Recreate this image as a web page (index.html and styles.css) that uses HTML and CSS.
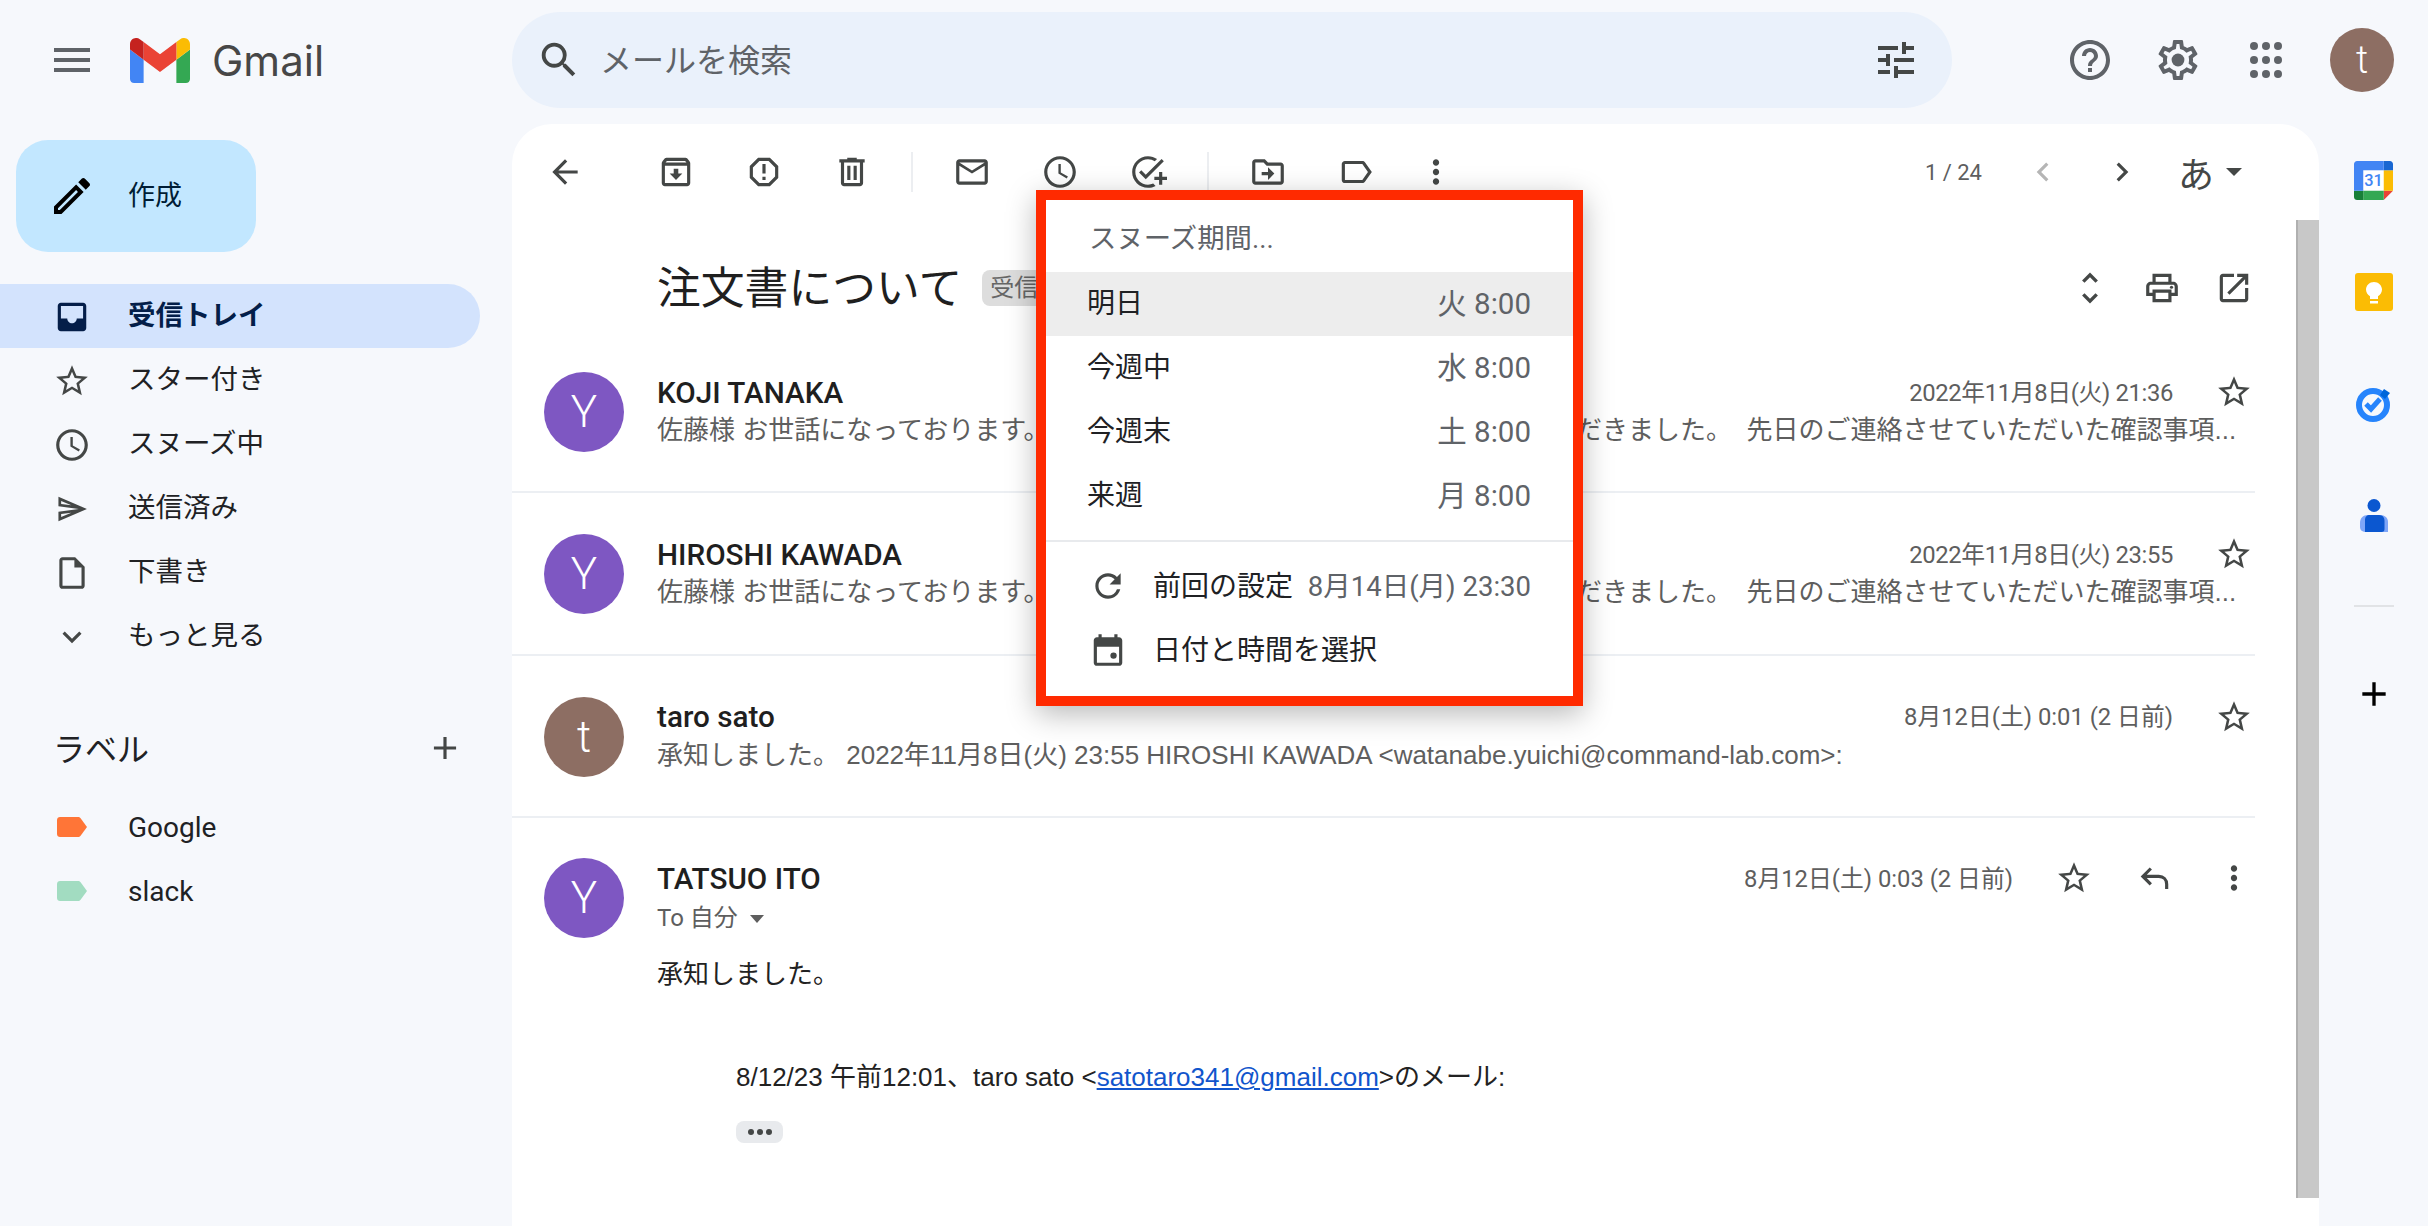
FILE: index.html
```html
<!DOCTYPE html>
<html lang="ja">
<head>
<meta charset="UTF-8" />
<meta name="viewport" content="width=device-width, initial-scale=1" />
<title>Gmail</title>
<link rel="stylesheet" href="styles.css">
</head>

<body>
  <svg class="defs" width="0" height="0">
    <symbol id="i-star" viewBox="0 0 24 24"><path d="M22 9.24l-7.19-.62L12 2 9.19 8.63 2 9.24l5.46 4.73L5.82 21 12 17.27 18.18 21l-1.63-7.03L22 9.24zM12 15.4l-3.76 2.27 1-4.28-3.32-2.88 4.38-.38L12 6.1l1.71 4.04 4.38.38-3.32 2.88 1 4.28L12 15.4z"/></symbol>
    <symbol id="i-clock" viewBox="0 0 24 24"><path d="M11.99 2C6.47 2 2 6.48 2 12s4.47 10 9.99 10C17.52 22 22 17.52 22 12S17.52 2 11.99 2zM12 20c-4.42 0-8-3.58-8-8s3.58-8 8-8 8 3.58 8 8-3.58 8-8 8zm.5-13H11v6l5.25 3.15.75-1.23-4.5-2.67z"/></symbol>
    <symbol id="i-more" viewBox="0 0 24 24"><path d="M12 8c1.1 0 2-.9 2-2s-.9-2-2-2-2 .9-2 2 .9 2 2 2zm0 2c-1.1 0-2 .9-2 2s.9 2 2 2 2-.9 2-2-.9-2-2-2zm0 6c-1.1 0-2 .9-2 2s.9 2 2 2 2-.9 2-2-.9-2-2-2z"/></symbol>
    <symbol id="i-add" viewBox="0 0 24 24"><path d="M19 13h-6v6h-2v-6H5v-2h6V5h2v6h6v2z"/></symbol>
    <symbol id="i-tag" viewBox="0 0 30 20"><path d="M3 0h18c1 0 2 .5 2.6 1.3L30 10l-6.4 8.7c-.6.8-1.6 1.3-2.6 1.3H3c-1.7 0-3-1.3-3-3V3c0-1.7 1.3-3 3-3z"/></symbol>
  </svg>

  <div class="app">
    <header class="topbar">
      <div class="brand">
        <svg class="ic ic-lg" viewBox="0 0 24 24"><path d="M3 18h18v-2H3v2zm0-5h18v-2H3v2zm0-7v2h18V6H3z"/></svg>
        <svg class="logo" viewBox="52 42 88 66">
          <path fill="#4285f4" d="M58 108h14V74L52 59v43c0 3.32 2.69 6 6 6"/>
          <path fill="#34a853" d="M120 108h14c3.32 0 6-2.69 6-6V59l-20 15"/>
          <path fill="#fbbc04" d="M120 48v26l20-15v-8c0-7.42-8.47-11.65-14.4-7.2"/>
          <path fill="#ea4335" d="M72 74V48l24 18 24-18v26L96 92"/>
          <path fill="#c5221f" d="M52 51v8l20 15V48l-5.6-4.2c-5.94-4.45-14.4-.22-14.4 7.2"/>
        </svg>
        <span class="brand-name">Gmail</span>
      </div>
      <div class="search">
        <svg class="ic ic-search" viewBox="0 0 24 24"><path d="M15.5 14h-.79l-.28-.27A6.471 6.471 0 0 0 16 9.5 6.5 6.5 0 1 0 9.5 16c1.61 0 3.09-.59 4.23-1.57l.27.28v.79l5 4.99L20.49 19l-4.99-5zm-6 0C7.01 14 5 11.99 5 9.5S7.01 5 9.5 5 14 7.01 14 9.5 11.99 14 9.5 14z"/></svg>
        <span class="search-text">メールを検索</span>
        <svg class="ic ic-lg search-tune" viewBox="0 0 24 24"><path d="M3 17v2h6v-2H3zM3 5v2h10V5H3zm10 16v-2h8v-2h-8v-2h-2v6h2zM7 9v2H3v2h4v2h2V9H7zm14 4v-2H11v2h10zm-6-4h2V7h4V5h-4V3h-2v6z"/></svg>
      </div>
      <div class="top-actions">
        <span class="top-btn"><svg class="ic ic-lg" viewBox="0 0 24 24"><path d="M11 18h2v-2h-2v2zm1-16C6.48 2 2 6.48 2 12s4.48 10 10 10 10-4.48 10-10S17.52 2 12 2zm0 18c-4.41 0-8-3.59-8-8s3.59-8 8-8 8 3.59 8 8-3.59 8-8 8zm0-14c-2.21 0-4 1.79-4 4h2c0-1.1.9-2 2-2s2 .9 2 2c0 2-3 1.75-3 5h2c0-2.25 3-2.5 3-5 0-2.21-1.79-4-4-4z"/></svg></span>
        <span class="top-btn"><svg class="ic ic-lg" viewBox="0 0 24 24"><path d="M19.43 12.98c.04-.32.07-.64.07-.98 0-.34-.03-.66-.07-.98l2.11-1.65c.19-.15.24-.42.12-.64l-2-3.46c-.09-.16-.26-.25-.44-.25-.06 0-.12.01-.17.03l-2.49 1c-.52-.4-1.08-.73-1.69-.98l-.38-2.65C14.46 2.18 14.25 2 14 2h-4c-.25 0-.46.18-.49.42l-.38 2.65c-.61.25-1.17.59-1.69.98l-2.49-1c-.06-.02-.12-.03-.18-.03-.17 0-.34.09-.43.25l-2 3.46c-.13.22-.07.49.12.64l2.11 1.65c-.04.32-.07.65-.07.98 0 .33.03.66.07.98l-2.11 1.65c-.19.15-.24.42-.12.64l2 3.46c.09.16.26.25.44.25.06 0 .12-.01.17-.03l2.49-1c.52.4 1.08.73 1.69.98l.38 2.65c.03.24.24.42.49.42h4c.25 0 .46-.18.49-.42l.38-2.65c.61-.25 1.17-.59 1.69-.98l2.49 1c.06.02.12.03.18.03.17 0 .34-.09.43-.25l2-3.46c.12-.22.07-.49-.12-.64l-2.11-1.65zm-1.98-1.71c.04.31.05.52.05.73 0 .21-.02.43-.05.73l-.14 1.13.89.7 1.08.84-.7 1.21-1.27-.51-1.04-.42-.9.68c-.43.32-.84.56-1.25.73l-1.06.43-.16 1.13-.2 1.35h-1.4l-.19-1.35-.16-1.13-1.06-.43c-.43-.18-.83-.41-1.23-.71l-.91-.7-1.06.43-1.27.51-.7-1.21 1.08-.84.89-.7-.14-1.13c-.03-.31-.05-.54-.05-.74s.02-.43.05-.73l.14-1.13-.89-.7-1.08-.84.7-1.21 1.27.51 1.04.42.9-.68c.43-.32.84-.56 1.25-.73l1.06-.43.16-1.13.2-1.35h1.39l.19 1.35.16 1.13 1.06.43c.43.18.83.41 1.23.71l.91.7 1.06-.43 1.27-.51.7 1.21-1.07.85-.89.7.14 1.13z"/><circle cx="12" cy="12" r="3.2"/></svg></span>
        <span class="top-btn"><svg class="ic ic-lg" viewBox="0 0 24 24"><circle cx="6" cy="5" r="2"/><circle cx="12" cy="5" r="2"/><circle cx="18" cy="5" r="2"/><circle cx="6" cy="12" r="2"/><circle cx="12" cy="12" r="2"/><circle cx="18" cy="12" r="2"/><circle cx="6" cy="19" r="2"/><circle cx="12" cy="19" r="2"/><circle cx="18" cy="19" r="2"/></svg></span>
        <span class="avatar avatar-top brown">t</span>
      </div>
    </header>

    <div class="content">
      <aside class="sidebar">
        <div class="compose">
          <svg class="ic ic-lg compose-icon" viewBox="0 0 24 24"><path d="M3 17.25V21h3.75L17.81 9.94l-3.75-3.75L3 17.25zM5.92 19H5v-.92l9.06-9.06.92.92L5.92 19zM20.71 5.63l-2.34-2.34c-.2-.2-.45-.29-.71-.29s-.51.1-.7.29l-1.83 1.83 3.75 3.75 1.83-1.83c.39-.39.39-1.02 0-1.41z"/></svg>
          <span>作成</span>
        </div>
        <ul class="nav">
          <li class="active"><svg class="ic" viewBox="0 0 24 24"><path d="M19 3H5c-1.1 0-2 .9-2 2v14c0 1.1.9 2 2 2h14c1.1 0 2-.9 2-2V5c0-1.1-.9-2-2-2zm0 10h-4c0 1.66-1.35 3-3 3s-3-1.34-3-3H5V5h14v8z"/></svg>受信トレイ</li>
          <li><svg class="ic"><use href="#i-star"/></svg>スター付き</li>
          <li><svg class="ic"><use href="#i-clock"/></svg>スヌーズ中</li>
          <li><svg class="ic" viewBox="0 0 28 28"><path d="M6.01 8.03l7.51 3.22-7.52-1 .01-2.22m7.5 8.72L6 19.97v-2.22l7.51-1M4.01 5L4 12l15 2-15 2 .01 7L25 14 4.01 5z"/></svg>送信済み</li>
          <li><svg class="ic" viewBox="0 0 24 24"><path d="M14 2H6c-1.1 0-1.99.9-1.99 2L4 20c0 1.1.89 2 1.99 2H18c1.1 0 2-.9 2-2V8l-6-6zM6 20V4h7.5v4.5H18V20H6z"/></svg>下書き</li>
          <li><svg class="ic" viewBox="0 0 24 24"><path d="M16.59 8.59L12 13.17 7.41 8.59 6 10l6 6 6-6z"/></svg>もっと見る</li>
        </ul>
        <div class="labels-head">
          <span>ラベル</span>
          <svg class="ic"><use href="#i-add"/></svg>
        </div>
        <ul class="nav labels">
          <li><svg class="tag tag-orange"><use href="#i-tag"/></svg>Google</li>
          <li><svg class="tag tag-green"><use href="#i-tag"/></svg>slack</li>
        </ul>
      </aside>

      <main class="thread">
        <div class="toolbar">
          <span class="tb-btn tb-back"><svg class="ic" viewBox="0 0 24 24"><path d="M20 11H7.83l5.59-5.59L12 4l-8 8 8 8 1.41-1.41L7.83 13H20v-2z"/></svg></span>
          <span class="tb-btn"><svg class="ic" viewBox="0 0 24 24"><path d="M20.54 5.23l-1.39-1.68C18.88 3.21 18.47 3 18 3H6c-.47 0-.88.21-1.16.55L3.46 5.23C3.17 5.57 3 6.02 3 6.5V19c0 1.1.9 2 2 2h14c1.1 0 2-.9 2-2V6.5c0-.48-.17-.93-.46-1.27zM6.24 5h11.52l.83 1H5.42l.82-1zM5 19V8h14v11H5zm8.45-9h-2.9v3H8l4 4 4-4h-2.55z"/></svg></span>
          <span class="tb-btn"><svg class="ic" viewBox="0 0 24 24"><path d="M15.73 3H8.27L3 8.27v7.46L8.27 21h7.46L21 15.73V8.27L15.73 3zM19 14.9L14.9 19H9.1L5 14.9V9.1L9.1 5h5.8L19 9.1v5.8zM11 7h2v6h-2zm0 8h2v2h-2z"/></svg></span>
          <span class="tb-btn"><svg class="ic" viewBox="0 0 24 24"><path d="M15 4V3H9v1H4v2h1v13c0 1.1.9 2 2 2h10c1.1 0 2-.9 2-2V6h1V4h-5zm2 15H7V6h10v13zM9 8h2v9H9zm4 0h2v9h-2z"/></svg></span>
          <span class="tb-sep"></span>
          <span class="tb-btn"><svg class="ic" viewBox="0 0 24 24"><path d="M22 6c0-1.1-.9-2-2-2H4c-1.1 0-2 .9-2 2v12c0 1.1.9 2 2 2h16c1.1 0 2-.9 2-2V6zm-2 0l-8 5-8-5h16zm0 12H4V8l8 5 8-5v10z"/></svg></span>
          <span class="tb-btn"><svg class="ic"><use href="#i-clock"/></svg></span>
          <span class="tb-btn"><svg class="ic" viewBox="0 0 24 24"><path d="M22 5.18L10.59 16.6l-4.24-4.24 1.41-1.41 2.83 2.83 10-10L22 5.18zM12 20c-4.41 0-8-3.59-8-8s3.59-8 8-8c1.57 0 3.04.46 4.28 1.25l1.45-1.45C16.1 2.67 14.13 2 12 2 6.48 2 2 6.48 2 12s4.48 10 10 10c1.73 0 3.36-.44 4.78-1.22l-1.5-1.5c-1 .46-2.11.72-3.28.72zm7-5h-3v2h3v3h2v-3h3v-2h-3v-3h-2v3z"/></svg></span>
          <span class="tb-sep"></span>
          <span class="tb-btn"><svg class="ic" viewBox="0 0 24 24"><path d="M20 6h-8l-2-2H4c-1.1 0-1.99.9-1.99 2L2 18c0 1.1.9 2 2 2h16c1.1 0 2-.9 2-2V8c0-1.1-.9-2-2-2zm0 12H4V6h5.17l2 2H20v10zm-8-4H8v-2h4V9l4 4-4 4v-3z"/></svg></span>
          <span class="tb-btn"><svg class="ic" viewBox="0 0 24 24"><path d="M17.63 5.84C17.27 5.33 16.67 5 16 5L5 5.01C3.9 5.01 3 5.9 3 7v10c0 1.1.9 1.99 2 1.99L16 19c.67 0 1.27-.33 1.63-.84L22 12l-4.37-6.16zM16 17H5V7h11l3.55 5L16 17z"/></svg></span>
          <span class="tb-btn tb-narrow"><svg class="ic"><use href="#i-more"/></svg></span>

          <div class="pager">
            <span class="pager-text">1 / 24</span>
            <svg class="ic pager-prev" viewBox="0 0 24 24"><path d="M15.41 7.41L14 6l-6 6 6 6 1.41-1.41L10.83 12z"/></svg>
            <svg class="ic pager-next" viewBox="0 0 24 24"><path d="M10 6L8.59 7.41 13.17 12l-4.58 4.59L10 18l6-6z"/></svg>
            <span class="pager-ime">あ</span>
            <span class="pager-caret"></span>
          </div>
        </div>

        <div class="subject">
          <h1>注文書について</h1>
          <span class="chip">受信トレイ</span>
          <div class="subject-actions">
            <svg class="ic" viewBox="1 1 22 22"><path d="M12 5.83L15.17 9l1.41-1.41L12 3 7.41 7.59 8.83 9 12 5.83zm0 12.34L8.83 15l-1.41 1.41L12 21l4.59-4.59L15.17 15 12 18.17z"/></svg>
            <svg class="ic" viewBox="0 0 24 24"><path d="M19 8h-1V3H6v5H5c-1.66 0-3 1.34-3 3v6h4v4h12v-4h4v-6c0-1.66-1.34-3-3-3zM8 5h8v3H8V5zm8 12v2H8v-4h8v2zm2-2v-2H6v2H4v-4c0-.55.45-1 1-1h14c.55 0 1 .45 1 1v4h-2z"/><circle cx="18" cy="11.5" r="1"/></svg>
            <svg class="ic" viewBox="0 0 24 24"><path d="M19 19H5V5h7V3H5c-1.11 0-2 .9-2 2v14c0 1.1.89 2 2 2h14c1.1 0 2-.9 2-2v-7h-2v7zM14 3v2h3.59l-9.83 9.83 1.41 1.41L19 6.41V10h2V3h-7z"/></svg>
          </div>
        </div>

        <div class="msg">
          <span class="avatar purple">Y</span>
          <div class="msg-body">
            <div class="msg-head">
              <span class="sender">KOJI TANAKA</span>
              <span class="date date-long">2022年11月8日(火) 21:36</span>
              <svg class="ic star"><use href="#i-star"/></svg>
            </div>
            <p class="snippet">佐藤様 お世話になっております。 この度は、ご注文書についてのご返信をいただきました。&nbsp; 先日のご連絡させていただいた確認事項...</p>
          </div>
        </div>

        <div class="msg">
          <span class="avatar purple">Y</span>
          <div class="msg-body">
            <div class="msg-head">
              <span class="sender">HIROSHI KAWADA</span>
              <span class="date date-long">2022年11月8日(火) 23:55</span>
              <svg class="ic star"><use href="#i-star"/></svg>
            </div>
            <p class="snippet">佐藤様 お世話になっております。 この度は、ご注文書についてのご返信をいただきました。&nbsp; 先日のご連絡させていただいた確認事項...</p>
          </div>
        </div>

        <div class="msg">
          <span class="avatar brown">t</span>
          <div class="msg-body">
            <div class="msg-head">
              <span class="sender">taro sato</span>
              <span class="date">8月12日(土) 0:01 (2 日前)</span>
              <svg class="ic star"><use href="#i-star"/></svg>
            </div>
            <p class="snippet">承知しました。 2022年11月8日(火) 23:55 HIROSHI KAWADA &lt;watanabe.yuichi@command-lab.com&gt;:</p>
          </div>
        </div>

        <div class="msg msg-open">
          <span class="avatar purple">Y</span>
          <div class="msg-body">
            <div class="msg-head">
              <span class="sender">TATSUO ITO</span>
              <span class="date">8月12日(土) 0:03 (2 日前)</span>
              <svg class="ic star"><use href="#i-star"/></svg>
              <svg class="ic msg-act" viewBox="0 0 24 24"><path d="M10 6L5 11l5 5M5 11h10c3 0 5 2 5 5v3" fill="none" stroke="currentColor" stroke-width="2"/></svg>
              <svg class="ic msg-act"><use href="#i-more"/></svg>
            </div>
            <div class="to-line">To 自分 <span class="to-caret"></span></div>
            <p class="text">承知しました。</p>
            <p class="quote">8/12/23 午前12:01、taro sato &lt;<a href="#">satotaro341@gmail.com</a>&gt;のメール:</p>
            <span class="dots"><i></i><i></i><i></i></span>
          </div>
        </div>

        <div class="scrollbar"></div>
      </main>

      <aside class="addons">
        <span class="addon">
          <svg width="39" height="39" viewBox="0 0 200 200">
            <path fill="#fff" d="M152.6 47.4H47.4v105.2h105.2z"/>
            <path fill="#ea4335" d="M152.6 200L200 152.6h-47.4z"/>
            <path fill="#fbbc04" d="M200 47.4h-47.4v105.2H200z"/>
            <path fill="#34a853" d="M152.6 152.6H47.4V200h105.2z"/>
            <path fill="#188038" d="M0 152.6v31.6C0 192.9 7.1 200 15.8 200h31.6v-47.4z"/>
            <path fill="#1967d2" d="M200 47.4V15.8C200 7.1 192.9 0 184.2 0h-31.6v47.4z"/>
            <path fill="#4285f4" d="M152.6 0H15.8C7.1 0 0 7.1 0 15.8v136.8h47.4V47.4h105.2z"/>
            <text x="100" y="130" text-anchor="middle" class="cal-num">31</text>
          </svg>
        </span>
        <span class="addon">
          <svg width="38" height="38" viewBox="0 0 38 38">
            <rect width="38" height="38" rx="3" fill="#fbbc04"/>
            <path fill="#fff" d="M19 9c-4.4 0-8 3.4-8 7.6 0 2.9 1.7 5.4 4 6.7V26h8v-2.7c2.3-1.3 4-3.8 4-6.7C27 12.4 23.4 9 19 9zM15 28h8v2.5h-8z"/>
          </svg>
        </span>
        <span class="addon">
          <svg width="36" height="36" viewBox="0 0 36 36">
            <circle cx="17" cy="19" r="14" fill="none" stroke="#2684fc" stroke-width="6"/>
            <path fill="none" stroke="#2684fc" stroke-width="5" d="M10 18l5 5 9-10"/>
            <path fill="#0066da" d="M28 3l6 4-5 6-5-4z"/>
          </svg>
        </span>
        <span class="addon">
          <svg width="30" height="34" viewBox="0 0 30 34">
            <circle cx="15" cy="6.5" r="6.5" fill="#0b57d0"/>
            <path fill="#7fa6f8" d="M9 16h12c5 0 8 3 8 7v10H8c-5 0-7-2-7-5v-4c0-5 3-8 8-8z"/>
            <path fill="#0b57d0" d="M11 16h9c4 0 5.5 3 5.5 6v8c0 2-1 3-3 3H6v-12c0-3 1.5-5 5-5z"/>
          </svg>
        </span>
        <span class="addon-sep"></span>
        <span class="addon">
          <svg class="ic ic-plus"><use href="#i-add"/></svg>
        </span>
      </aside>
    </div>

    <!-- スヌーズのポップアップ -->
    <div class="snooze">
      <div class="snooze-title">スヌーズ期間...</div>
      <div class="snooze-item hover"><span>明日</span><span class="when">火 8:00</span></div>
      <div class="snooze-item"><span>今週中</span><span class="when">水 8:00</span></div>
      <div class="snooze-item"><span>今週末</span><span class="when">土 8:00</span></div>
      <div class="snooze-item"><span>来週</span><span class="when">月 8:00</span></div>
      <div class="snooze-sep"></div>
      <div class="snooze-item with-icon">
        <svg class="ic" viewBox="0 0 24 24"><path d="M17.65 6.35A7.958 7.958 0 0 0 12 4c-4.42 0-7.99 3.58-7.99 8s3.57 8 7.99 8c3.73 0 6.84-2.55 7.73-6h-2.08A5.99 5.99 0 0 1 12 18c-3.31 0-6-2.69-6-6s2.69-6 6-6c1.66 0 3.14.69 4.22 1.78L13 11h7V4l-2.35 2.35z"/></svg>
        <span>前回の設定</span><span class="when">8月14日(月) 23:30</span>
      </div>
      <div class="snooze-item with-icon">
        <svg class="ic" viewBox="0 0 24 24"><path d="M19 4h-1V2h-2v2H8V2H6v2H5c-1.1 0-2 .9-2 2v14c0 1.1.9 2 2 2h14c1.1 0 2-.9 2-2V6c0-1.1-.9-2-2-2zm0 16H5V10h14v10z"/><circle cx="15.5" cy="15.5" r="2"/></svg>
        <span>日付と時間を選択</span>
      </div>
    </div>
  </div>
</body>
</html>
```

FILE: styles.css
```css
* {
  box-sizing: border-box;
}
body {
  margin: 0;
  background: #f6f8fc;
  color: #1f1f1f;
  font-family: Roboto, "Noto Sans CJK JP", sans-serif;
  overflow: hidden;
}
.defs {
  position: absolute;
}
.app {
  position: relative;
  width: 2428px;
  height: 1226px;
  display: flex;
  flex-direction: column;
}
ul {
  list-style: none;
  margin: 0;
  padding: 0;
}
p, h1 {
  margin: 0;
}

/* icons */
.ic {
  width: 38px;
  height: 38px;
  flex: none;
  fill: #444746;
  color: #444746;
}
.ic-lg {
  width: 48px;
  height: 48px;
}

/* top bar */
.topbar {
  display: flex;
  align-items: center;
  height: 120px;
  margin-bottom: 4px;
}
.brand {
  width: 512px;
  display: flex;
  align-items: center;
  padding-left: 48px;
}
.brand .ic {
  fill: #5f6368;
}
.logo {
  width: 60px;
  height: 45px;
  margin-left: 34px;
}
.brand-name {
  margin-left: 22px;
  font-family: Inter, sans-serif;
  font-size: 42px;
  color: #474747;
}
.search {
  width: 1440px;
  height: 96px;
  border-radius: 48px;
  background: #eaf1fb;
  display: flex;
  align-items: center;
  padding: 0 32px 0 24px;
}
.ic-search {
  width: 46px;
  height: 46px;
}
.search-text {
  margin: 0 0 5px 18px;
  font-size: 32px;
  color: #5f6368;
}
.search-tune {
  margin-left: auto;
}
.top-actions {
  display: flex;
  align-items: center;
  margin-left: 94px;
}
.top-btn {
  width: 88px;
  display: flex;
  justify-content: center;
}
.top-btn .ic {
  fill: #5f6368;
}
.avatar {
  width: 80px;
  height: 80px;
  flex: none;
  border-radius: 50%;
  display: flex;
  align-items: center;
  justify-content: center;
  color: #fff;
  font-size: 44px;
  font-weight: 300;
}
.avatar-top {
  width: 64px;
  height: 64px;
  margin-left: 20px;
  font-size: 38px;
}
.purple { background: #7e57c2; }
.brown { background: #8d6e63; }

.content {
  flex: 1;
  display: flex;
  min-height: 0;
}

/* sidebar */
.sidebar {
  width: 512px;
  flex: none;
}
.compose {
  width: 240px;
  height: 112px;
  margin: 16px 0 32px 16px;
  border-radius: 32px;
  background: #c2e7ff;
  color: #001d35;
  display: flex;
  align-items: center;
  font-size: 27px;
  padding-left: 32px;
}
.compose span {
  margin-bottom: 5px;
}
.compose-icon {
  fill: #000;
  margin-right: 32px;
}
.nav li {
  width: 480px;
  height: 64px;
  display: flex;
  align-items: center;
  gap: 37px;
  padding: 0 0 6px 53px;
  border-radius: 0 32px 32px 0;
  font-size: 27.5px;
  color: #202124;
}
.nav li .ic {
  margin-top: 8px;
}
.nav li.active {
  background: #d3e3fd;
  color: #041e49;
  font-weight: 700;
}
.nav li.active .ic {
  fill: #041e49;
}
.labels-head {
  width: 480px;
  height: 64px;
  margin-top: 48px;
  display: flex;
  align-items: center;
  justify-content: space-between;
  padding: 0 16px 3px 53px;
  font-size: 32px;
  color: #202124;
}
.labels-head .ic {
  margin-top: 3px;
}
.labels {
  margin-top: 15px;
}
.nav.labels li {
  padding: 0 0 0 51px;
  font-size: 28px;
}
.tag {
  width: 30px;
  height: 20px;
  margin-left: 6px;
  margin-right: 4px;
}
.tag-orange { fill: #ff7537; }
.tag-green { fill: #a2dcc1; }

/* thread */
.thread {
  position: relative;
  width: 1807px;
  flex: none;
  background: #fff;
  border-radius: 40px 40px 0 0;
  overflow: hidden;
}
.toolbar {
  height: 96px;
  display: flex;
  align-items: center;
  padding-left: 9px;
}
.tb-btn {
  width: 88px;
  display: flex;
  justify-content: center;
}
.tb-back {
  margin-right: 23px;
}
.tb-narrow {
  width: 72px;
}
.tb-sep {
  width: 2px;
  height: 40px;
  margin: 0 15px;
  background: #eceef1;
}
.pager {
  margin-left: auto;
  display: flex;
  align-items: center;
  padding-right: 77px;
  color: #5e5e5e;
}
.pager-text {
  font-size: 22px;
}
.pager-prev {
  margin-left: 42px;
  fill: #b5b5b5;
}
.pager-next {
  margin-left: 41px;
}
.pager-ime {
  margin-left: 37px;
  font-size: 36px;
  color: #444746;
}
.pager-caret {
  margin-left: 12px;
  border-left: 8px solid transparent;
  border-right: 8px solid transparent;
  border-top: 8px solid #444746;
}

.subject {
  height: 111px;
  padding: 34px 2px 9px 145px;
  margin-right: 64px;
  display: flex;
  align-items: center;
}
.subject h1 {
  margin-bottom: 6px;
  font-size: 43.8px;
  font-weight: 400;
}
.chip {
  height: 36px;
  margin-left: 20px;
  padding: 0 8px;
  border-radius: 8px;
  background: #ddd;
  color: #666;
  font-size: 24px;
  line-height: 36px;
}
.subject-actions {
  margin-left: auto;
  display: flex;
  gap: 34px;
}

.msg {
  display: flex;
  height: 162.4px;
  margin-right: 64px;
  padding: 41px 15px 0 32px;
  border-bottom: 2px solid #eceff3;
}
.msg-open {
  height: auto;
  padding-top: 40px;
  border-bottom: none;
}
.msg-body {
  flex: 1;
  min-width: 0;
  margin-left: 33px;
}
.msg-head {
  height: 36px;
  margin-top: 2px;
  margin-right: -13px;
  display: flex;
  align-items: center;
}
.sender {
  font-size: 29.7px;
  font-weight: 500;
}
.date {
  margin: 0 0 4px auto;
  font-size: 23.8px;
  color: #5e5e5e;
}
.date-long {
  letter-spacing: -0.35px;
}
.star {
  margin-left: 42px;
}
.msg-act {
  margin-left: 42px;
}
.snippet {
  font-family: "Liberation Sans", "Noto Sans CJK JP", sans-serif;
  font-size: 26px;
  line-height: 40px;
  color: #5e5e5e;
  white-space: nowrap;
}
.to-line {
  margin-top: 6px;
  font-size: 24px;
  line-height: 32px;
  color: #5e5e5e;
}
.to-caret {
  display: inline-block;
  margin-left: 6px;
  vertical-align: 3px;
  border-left: 7px solid transparent;
  border-right: 7px solid transparent;
  border-top: 8px solid #5e5e5e;
}
.text, .quote {
  font-family: "Liberation Sans", "Noto Sans CJK JP", sans-serif;
  font-size: 26px;
  line-height: 36px;
  color: #222;
}
.text {
  margin-top: 22px;
}
.quote {
  margin-top: 67px;
  margin-left: 79px;
}
.quote a {
  color: #1155cc;
}
.dots {
  margin: 26px 0 0 79px;
  width: 47px;
  height: 22px;
  border-radius: 8px;
  background: #e8eaed;
  display: flex;
  align-items: center;
  justify-content: center;
  gap: 3px;
}
.dots i {
  width: 6px;
  height: 6px;
  border-radius: 50%;
  background: #444746;
}

.scrollbar {
  position: absolute;
  top: 96px;
  right: 0;
  width: 23px;
  height: 978px;
  background: #c8c8c8;
  border-left: 2px solid #b0b0b0;
}

/* right add-on panel */
.addons {
  flex: 1;
  display: flex;
  flex-direction: column;
  align-items: center;
}
.addon {
  height: 112px;
  display: flex;
  align-items: center;
  justify-content: center;
}
.addon-sep {
  width: 40px;
  height: 2px;
  margin: 33px 0 31px;
  background: #e1e3e6;
}
.cal-num {
  font-family: Roboto, sans-serif;
  font-size: 84px;
  font-weight: 500;
  fill: #4285f4;
}
.ic-plus {
  width: 40px;
  height: 40px;
  fill: #000;
}

/* snooze popup */
.snooze {
  position: absolute;
  left: 1036px;
  top: 190px;
  width: 547px;
  height: 516px;
  background: #fff;
  border: 10px solid #ff2a00;
  box-shadow: 0 8px 28px rgb(0 0 0 / 0.28);
  font-size: 28px;
  color: #202124;
}
.snooze-title {
  height: 72px;
  padding: 19px 0 0 43px;
  font-size: 27.4px;
  line-height: 40px;
  color: #5f6368;
}
.snooze-item {
  height: 64px;
  display: flex;
  align-items: center;
  padding: 0 42px 6px 41px;
}
.snooze-item.hover {
  background: #ededed;
}
.when {
  margin-left: auto;
  color: #5f6368;
  font-size: 29.5px;
}
.snooze-sep {
  height: 2px;
  margin: 12px 0 13px;
  background: #e8eaed;
}
.with-icon {
  padding-left: 43px;
}
.with-icon .ic {
  margin: 3px 26px 0 0;
}
.with-icon .when {
  font-size: 27.5px;
}
```
